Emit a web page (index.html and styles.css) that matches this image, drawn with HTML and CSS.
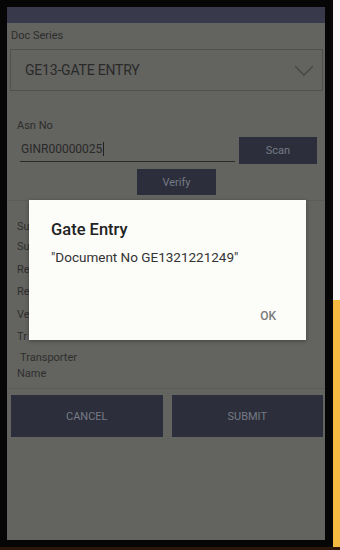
FILE: index.html
```html
<!DOCTYPE html>
<html>
<head>
<meta charset="utf-8">
<link rel="stylesheet" href="styles.css">
</head>
<body>
<div class="page">
  <div class="row">
    <div class="phone">
      <div class="screen">
        <div class="topbar"></div>
        <div class="content">
          <div class="label doc-label">Doc Series</div>
          <div class="select">
            <span class="select-text">GE13-GATE ENTRY</span>
            <svg class="chevron" width="20" height="12" viewBox="0 0 20 12"><path d="M1 1 L10 10 L19 1" fill="none" stroke="#4a4a48" stroke-width="1.6"/></svg>
          </div>
          <div class="label asn-label">Asn No</div>
          <div class="asn-row">
            <div class="input"><span>GINR00000025</span><span class="cursor"></span></div>
            <div class="btn scan">Scan</div>
          </div>
          <div class="verify-row"><div class="btn verify">Verify</div></div>
          <div class="fields">
            <div class="f f1">Su</div>
            <div class="f">Su</div>
            <div class="f">Re</div>
            <div class="f">Re</div>
            <div class="f">Ve</div>
            <div class="f">Tr</div>
            <div class="f trans"><span class="t1">Transporter</span><span class="t2">Name</span></div>
          </div>
          <div class="actions">
            <div class="btn act">CANCEL</div>
            <div class="btn act">SUBMIT</div>
          </div>
        </div>
        <div class="dialog">
          <div class="dlg-title">Gate Entry</div>
          <div class="dlg-msg">"Document No GE1321221249"</div>
          <div class="dlg-actions"><span class="ok">OK</span></div>
        </div>
      </div>
    </div>
    <div class="side">
      <div class="side-white"></div>
      <div class="side-yellow"></div>
    </div>
  </div>
  <div class="foot"></div>
</div>
</body>
</html>
```

FILE: styles.css
```css
* { box-sizing: border-box; }
html, body { margin: 0; padding: 0; }
body {
  width: 340px;
  height: 550px;
  overflow: hidden;
  background: #1e1208;
  font-family: Roboto, "Liberation Sans", sans-serif;
}
.page { display: flex; flex-direction: column; height: 550px; }
.row { display: flex; height: 547px; }
.phone {
  width: 333px;
  height: 547px;
  background: #060606;
  padding: 7px 8px 7px 7px;
}
.screen {
  position: relative;
  width: 318px;
  height: 533px;
  background: #636360;
  display: flex;
  flex-direction: column;
}
.topbar { height: 16px; background: #383a4c; }
.content { display: flex; flex-direction: column; }
.label { color: #2d2d2b; font-size: 11px; }
.doc-label { padding: 6px 0 0 4px; height: 26px; }
.select {
  margin: 0 2px 0 3px;
  height: 42px;
  border: 1px solid #50504d;
  display: flex;
  align-items: center;
  justify-content: space-between;
  padding: 0 8px 0 14px;
}
.select-text { color: #2a2a29; font-size: 14px; letter-spacing: -0.2px; }
.chevron { margin-top: 1px; }
.asn-label { padding: 28px 0 0 10px; height: 46px; }
.asn-row { display: flex; align-items: flex-start; padding-left: 13px; }
.input {
  width: 215px;
  height: 25px;
  border-bottom: 1.5px solid #2a2a2a;
  color: #2a2a29;
  font-size: 12px;
  display: flex;
  align-items: center;
  padding-left: 1px;
}
.cursor { display: inline-block; width: 1px; height: 14px; background: #222; margin-left: 1px; }
.btn {
  background: #2c2f3b;
  color: #767a85;
  display: flex;
  align-items: center;
  justify-content: center;
  font-size: 11px;
}
.scan { width: 78px; height: 27px; margin-left: 4px; }
.verify-row { display: flex; padding-left: 130px; margin-top: 5px; }
.verify { width: 79px; height: 26px; }
.fields {
  margin-top: 5px;
  border-top: 1px solid #5c5c58;
  border-bottom: 1px solid #5c5c58;
  padding: 19px 0 5px 10px;
  height: 189px;
}
.f { color: #2f2f2d; font-size: 11px; height: 22.5px; line-height: 14px; }
.f1 { height: 20px; }
.trans { display: flex; flex-direction: column; height: auto; margin-top: -3px; }
.t1 { padding-left: 3px; line-height: 16px; }
.t2 { line-height: 16px; }
.actions { display: flex; gap: 9px; padding: 6px 2px 0 4px; }
.act { flex: 1; height: 42px; }
.dialog {
  position: absolute;
  left: 22px;
  top: 193px;
  width: 277px;
  height: 140px;
  background: #fcfcf9;
  box-shadow: 0 1px 4px rgba(0,0,0,0.35);
  padding: 20px 22px 0 22px;
  display: flex;
  flex-direction: column;
}
.dlg-title { font-size: 16.5px; font-weight: 500; color: #222; line-height: 20px; }
.dlg-msg { font-size: 13.5px; color: #333; margin-top: 8px; line-height: 18px; }
.dlg-actions { display: flex; justify-content: flex-end; margin-top: 43px; padding-right: 8px; }
.ok { font-size: 12px; font-weight: 500; color: #7a7a7a; }
.side { width: 7px; display: flex; flex-direction: column; }
.side-white { height: 300px; background: #f6f6f6; }
.side-yellow { flex: 1; background: #f4b940; }
.foot { height: 3px; background: #2a170a; }
```
